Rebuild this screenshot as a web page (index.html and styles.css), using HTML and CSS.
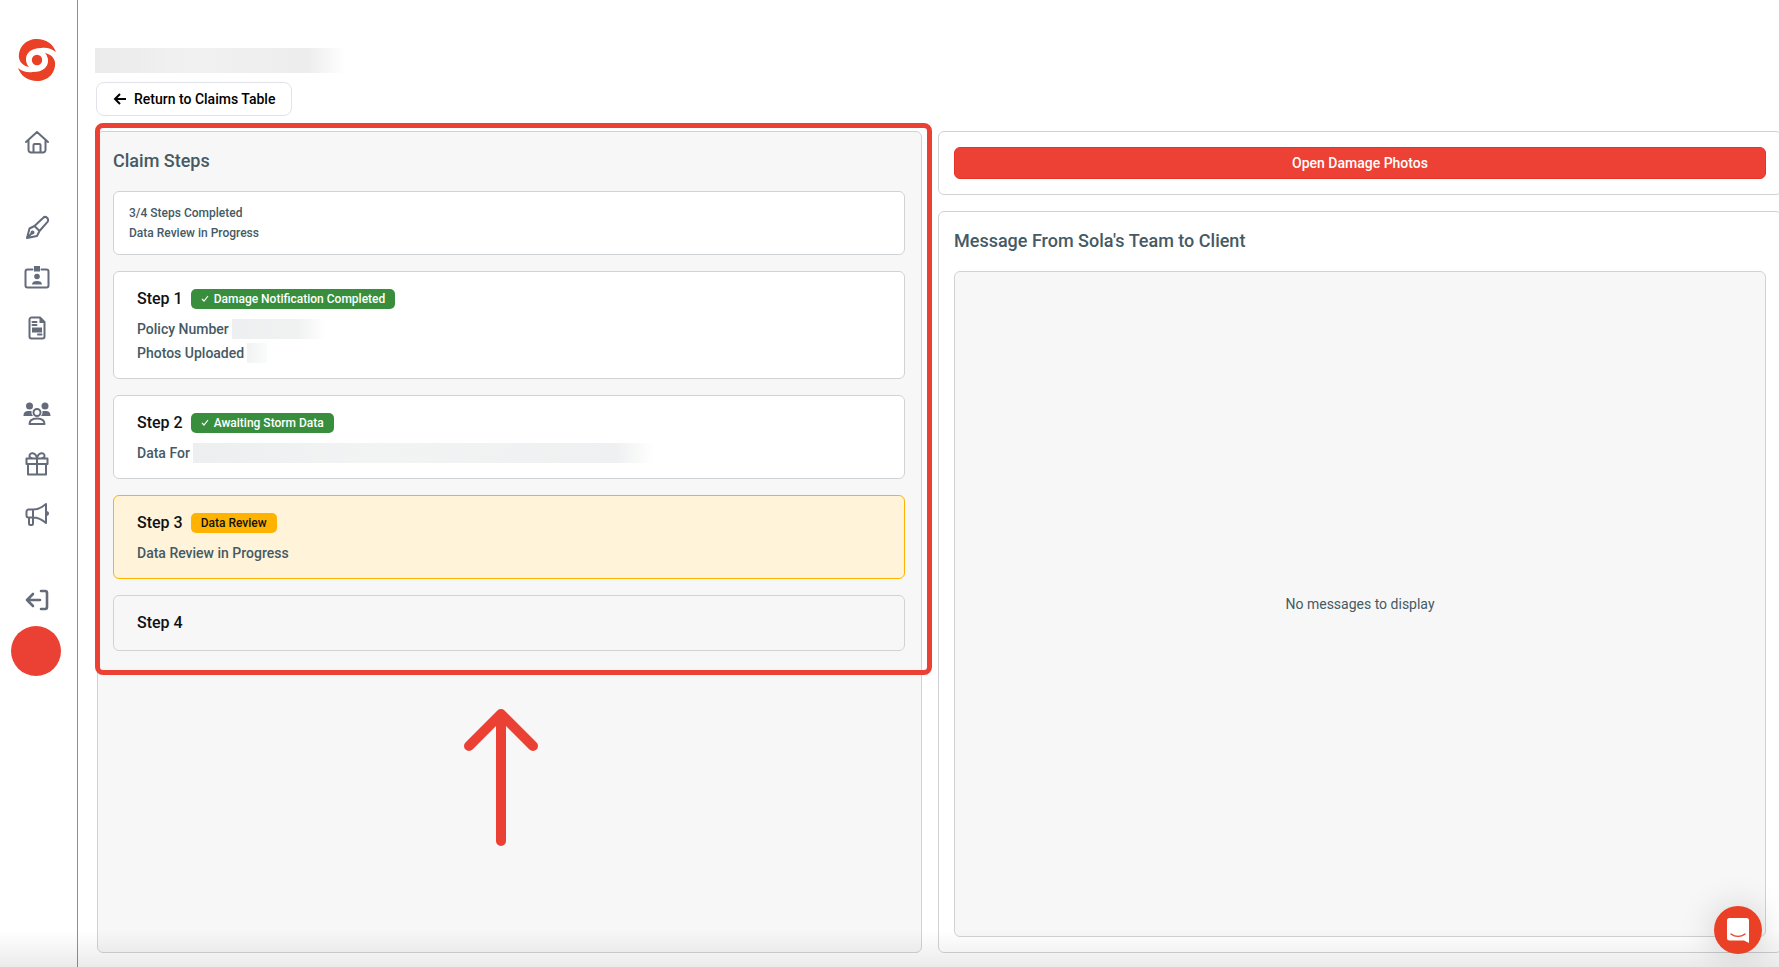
FILE: index.html
```html
<!DOCTYPE html>
<html lang="en">
<head>
    <meta charset="UTF-8">
    <title>Claim Steps</title>
    <link rel="stylesheet" href="styles.css">
</head>
<body>
    <nav class="sidebar">
        <a href="#" class="logo" aria-label="Sola">
            <svg width="38" height="42" viewBox="0 0 38 42">
                <path fill="#ea4025" d="M1 19C0 8 8 0 19 0c9 0 16 5 19 13-5-4-10-5-15-4C13 9 8 14 8 20c0 3 1 6 3 8C6 27 2 24 1 19z"/>
                <path fill="#ea4025" d="M37 23c1 11-7 19-18 19-9 0-16-5-19-13 5 4 10 5 15 4 10 0 15-5 15-11 0-3-1-6-3-8 5 1 9 4 10 9z"/>
                <circle cx="19" cy="21" r="8.500" fill="none" stroke="#fff" stroke-width="4"/>
                <circle cx="19" cy="21" r="5.200" fill="#ea4025"/>
            </svg>
        </a>
        <div class="nav-group">
            <a href="#" aria-label="Home">
                <svg class="icon" viewBox="0 0 26 26"><path d="M2 13 13 3l11 10M4.500 11v10a2.500 2.500 0 0 0 2.500 2.500h12a2.500 2.500 0 0 0 2.500-2.500V11M9.500 23v-7a1 1 0 0 1 1-1h5a1 1 0 0 1 1 1v7"/></svg>
            </a>
        </div>
        <div class="nav-group">
            <a href="#" aria-label="Design">
                <svg class="icon" viewBox="0 0 26 26"><path d="m3 23 2.500-9.500 5-2.500 5 5-2.500 5zM3 23l5-5M10.500 11l8.500-8a3 3 0 0 1 4.300 4.200L15.500 16"/><circle cx="8.500" cy="17.500" r="1" fill="currentColor"/></svg>
            </a>
            <a href="#" aria-label="Contacts">
                <svg class="icon" viewBox="0 0 26 26"><path d="M8.500 4.500H3.500a2 2 0 0 0-2 2v14a2 2 0 0 0 2 2h19a2 2 0 0 0 2-2v-14a2 2 0 0 0-2-2h-5"/><path class="solid" d="M10 1h6v5.500h-6zM8 19.500c0-2.500 2-3.500 5-3.500s5 1 5 3.500z"/><circle class="solid" cx="13" cy="11.500" r="2.800"/></svg>
            </a>
            <a href="#" aria-label="Documents">
                <svg class="icon" viewBox="0 0 26 26"><path d="M16 2.500H7.500a2 2 0 0 0-2 2v17a2 2 0 0 0 2 2h11a2 2 0 0 0 2-2V7zM8.500 7h4M8.500 10h4M14 19.500h3.500"/><path class="solid" d="M15.500 2.500V8h5.500zM8 12.500h10v5H8z"/></svg>
            </a>
        </div>
        <div class="nav-group">
            <a href="#" aria-label="Team">
                <svg class="icon wide" viewBox="0 0 28 26"><circle class="solid" cx="6.500" cy="5" r="3.500"/><circle class="solid" cx="22" cy="5" r="3.500"/><path class="solid" d="M.5 15c0-4 2-5 5-5h3a6 6 0 0 0 1.500 5zM27.500 15c0-4-2-5-5-5h-3a6 6 0 0 1-1.500 5z"/><circle cx="14" cy="11.500" r="3.500"/><path d="M6.500 23c0-4 3-5.500 7.500-5.500s7.500 1.500 7.500 5.500z"/></svg>
            </a>
            <a href="#" aria-label="Rewards">
                <svg class="icon" viewBox="0 0 26 26"><path d="M2.500 7.500h21V13h-21zM4 13h18v10.500H4zM13 7.500v16M13 7.500C11 7.500 5.500 8 5.500 5c0-4 6.500-4 7.500 2.500 1-6.500 7.500-6.500 7.500-2.500 0 3-5.500 2.500-7.500 2.500z"/></svg>
            </a>
            <a href="#" aria-label="Announcements">
                <svg class="icon" viewBox="0 0 26 26"><path d="M4.500 8.500H9c5 0 9-2 13-5.500v19c-4-3.500-8-5.500-13-5.500H4.500a2 2 0 0 1-2-2v-4a2 2 0 0 1 2-2zM9 8.500v14a1.500 1.500 0 0 1-1.500 1.500h-1A1.500 1.500 0 0 1 5 22.500v-6M22.500 11a1.500 1.500 0 0 1 0 3"/></svg>
            </a>
        </div>
        <div class="nav-group">
            <a href="#" aria-label="Log out">
                <svg class="icon bold" viewBox="0 0 26 26"><path d="M16 13H3m6-6-6 6 6 6M17 4h4a2 2 0 0 1 2 2v14a2 2 0 0 1-2 2h-4"/></svg>
            </a>
        </div>
        <div class="avatar"></div>
    </nav>

    <main class="content">
        <div class="redacted redacted-title"></div>
        <button type="button" class="back-button">
            <svg width="14" height="12" viewBox="0 0 14 12" fill="none" stroke="currentColor" stroke-width="2"><path d="M13 6H2m5-5L2 6l5 5"/></svg>
            Return to Claims Table
        </button>

        <div class="columns">
            <section class="panel claim-panel">
                <div class="callout">
                    <h2>Claim Steps</h2>
                    <div class="summary">
                        <p>3/4 Steps Completed</p>
                        <p>Data Review in Progress</p>
                    </div>
                    <article class="step">
                        <h3>Step 1 <span class="badge done"><svg class="check" viewBox="0 0 8 8"><path d="m1 4 2 2 4-5"/></svg>Damage Notification Completed</span></h3>
                        <p>Policy Number <span class="redacted redacted-policy"></span></p>
                        <p>Photos Uploaded <span class="redacted redacted-photos"></span></p>
                    </article>
                    <article class="step">
                        <h3>Step 2 <span class="badge done"><svg class="check" viewBox="0 0 8 8"><path d="m1 4 2 2 4-5"/></svg>Awaiting Storm Data</span></h3>
                        <p>Data For <span class="redacted redacted-address"></span></p>
                    </article>
                    <article class="step current">
                        <h3>Step 3 <span class="badge review">Data Review</span></h3>
                        <p>Data Review in Progress</p>
                    </article>
                    <article class="step upcoming">
                        <h3>Step 4</h3>
                    </article>
                </div>
                <svg class="callout-arrow" width="74" height="137" viewBox="0 0 74 137"><path d="M37 132V6M5 37 37 5l32 32"/></svg>
            </section>

            <div class="side">
                <section class="panel photos-panel">
                    <button type="button" class="photos-button">Open Damage Photos</button>
                </section>
                <section class="panel message-panel">
                    <h2>Message From Sola's Team to Client</h2>
                    <div class="messages">No messages to display</div>
                </section>
            </div>
        </div>
    </main>

    <div class="bottom-fade"></div>
    <button type="button" class="chat-button" aria-label="Open chat">
        <svg width="22" height="25" viewBox="0 0 22 25"><path fill="#fff" d="M2.500 0h17A2.500 2.500 0 0 1 22 2.500V25l-5-2.500H2.500A2.500 2.500 0 0 1 0 20V2.500A2.500 2.500 0 0 1 2.500 0z"/><path d="M4 16c4 3.200 10 3.200 14 0" fill="none" stroke="#ea4025" stroke-width="1.400" stroke-linecap="round"/></svg>
    </button>
</body>
</html>
```

FILE: styles.css
```css
* {
    box-sizing: border-box;
}
body {
    display: flex;
    height: 100vh;
    margin: 0;
    overflow: hidden;
    background-color: #fff;
    color: #455a64;
    font-family: Roboto, "Liberation Sans", sans-serif;
    font-size: 14px;
    font-weight: 500;
}
h2, h3, p {
    margin: 0;
}
button {
    font-family: inherit;
    cursor: pointer;
}

/* Sidebar */
.sidebar {
    display: flex;
    flex-direction: column;
    align-items: center;
    flex: none;
    width: 78px;
    padding: 39px 4px 0 0;
    border-right: 1px solid #8b929c;
}
.sidebar a {
    display: flex;
    color: #646b7b;
}
.sidebar .logo {
    margin-bottom: 48px;
}
.nav-group {
    display: flex;
    flex-direction: column;
    align-items: center;
    gap: 24px;
    margin-bottom: 60px;
}
.nav-group:nth-last-child(2) {
    margin-bottom: 13px;
}
.icon {
    width: 26px;
    height: 26px;
    fill: none;
    stroke: currentColor;
    stroke-width: 2;
    stroke-linecap: round;
    stroke-linejoin: round;
}
.icon.wide {
    width: 28px;
}
.icon.bold {
    stroke-width: 2.6;
}
.icon .solid {
    fill: currentColor;
    stroke: none;
}
.avatar {
    width: 50px;
    height: 50px;
    margin-right: 2px;
    border-radius: 50%;
    background-color: #eb4034;
}

/* Page content */
.content {
    display: flex;
    flex-direction: column;
    align-items: flex-start;
    flex: 1;
    min-width: 0;
    margin-right: -3px;
    padding: 48px 0 14px 19px;
}
.redacted {
    display: inline-block;
    height: 20px;
    background: linear-gradient(to right, #edeff0, #f0f2f2 70%, #fff);
}
.redacted-title {
    width: 250px;
    height: 25px;
    margin: 0 0 9px -2px;
    background: linear-gradient(to right, #ebebeb, #f1f1f1 40%, #ededed 85%, #fff);
}
.redacted-policy {
    width: 94px;
}
.redacted-photos {
    width: 20px;
    background: linear-gradient(to right, #f1f3f3, #fafbfb);
}
.redacted-address {
    width: 460px;
    background: linear-gradient(to right, #edeef0, #f2f4f4 40%, #eff0f1 92%, #fff);
}
.back-button {
    display: flex;
    align-items: center;
    gap: 7px;
    height: 34px;
    margin: 0 0 15px -1px;
    padding: 0 16px;
    border: 1px solid #e2e3ea;
    border-radius: 8px;
    background-color: #fff;
    color: #000;
    font-size: 14px;
    font-weight: 500;
}
.columns {
    display: grid;
    grid-template-columns: 825fr 844fr;
    gap: 16px;
    flex: 1;
    align-self: stretch;
}
.panel {
    border: 1px solid #d0d3d6;
    border-radius: 6px;
}
.panel h2 {
    font-size: 18px;
    font-weight: 500;
    line-height: 28px;
}

/* Claim steps */
.claim-panel {
    background-color: #f7f7f7;
}
.callout {
    position: relative;
    display: flex;
    flex-direction: column;
    gap: 16px;
    padding: 15px 16px 16px 15px;
}
.callout::after {
    content: "";
    position: absolute;
    inset: -9px -11px -8px -3px;
    border: 5px solid #eb4034;
    border-radius: 8px;
    pointer-events: none;
}
.summary {
    padding: 11px 15px;
    border: 1px solid #d0d3d6;
    border-radius: 6px;
    background-color: #fff;
    font-size: 12px;
    line-height: 20px;
}
.step {
    min-height: 56px;
    padding: 15px 23px 13px;
    border: 1px solid #d0d3d6;
    border-radius: 6px;
    background-color: #fff;
    line-height: 24px;
}
.step h3 {
    display: flex;
    align-items: center;
    gap: 8px;
    color: #111;
    font-size: 16px;
    font-weight: 500;
}
.step h3 + p {
    margin-top: 6px;
}
.step p {
    display: flex;
    align-items: center;
    gap: 3px;
}
.step.current {
    border-color: #ffb300;
    background-color: #fff4d9;
}
.step.upcoming {
    background-color: #f7f7f7;
}
.badge {
    display: flex;
    align-items: center;
    gap: 5px;
    height: 20px;
    padding: 0 10px;
    border-radius: 5px;
    font-size: 12px;
}
.badge.done {
    background-color: #388e3c;
    color: #fff;
}
.badge.review {
    background-color: #ffb300;
    color: #111;
}
.check {
    width: 8px;
    height: 8px;
    fill: none;
    stroke: currentColor;
    stroke-width: 1.2;
}
.callout-arrow {
    display: block;
    margin: 42px auto 0;
    padding-right: 18px;
    box-sizing: content-box;
    fill: none;
    stroke: #eb4034;
    stroke-width: 10;
    stroke-linecap: round;
    stroke-linejoin: round;
}

/* Photos and messages */
.side {
    display: flex;
    flex-direction: column;
    gap: 16px;
}
.photos-panel {
    padding: 15px;
}
.photos-button {
    display: block;
    width: 100%;
    height: 32px;
    border: 1px solid #e53327;
    border-radius: 6px;
    background-color: #ec4134;
    color: #fff;
    font-size: 14px;
    font-weight: 500;
}
.message-panel {
    display: flex;
    flex-direction: column;
    gap: 16px;
    flex: 1;
    padding: 15px;
}
.messages {
    display: flex;
    align-items: center;
    justify-content: center;
    flex: 1;
    border: 1px solid #d0d3d6;
    border-radius: 6px;
    background-color: #f7f7f7;
    font-weight: 400;
}

/* Overlays */
.bottom-fade {
    position: fixed;
    right: 0;
    bottom: 0;
    left: 0;
    height: 36px;
    background: linear-gradient(to bottom, transparent, rgba(0, 0, 0, 0.08));
    pointer-events: none;
}
.chat-button {
    position: fixed;
    right: 17px;
    bottom: 13px;
    display: flex;
    align-items: center;
    justify-content: center;
    width: 48px;
    height: 48px;
    padding: 0;
    border: none;
    border-radius: 50%;
    background-color: #ea4025;
    box-shadow: 0 2px 36px rgba(0, 0, 0, 0.18);
}
```
